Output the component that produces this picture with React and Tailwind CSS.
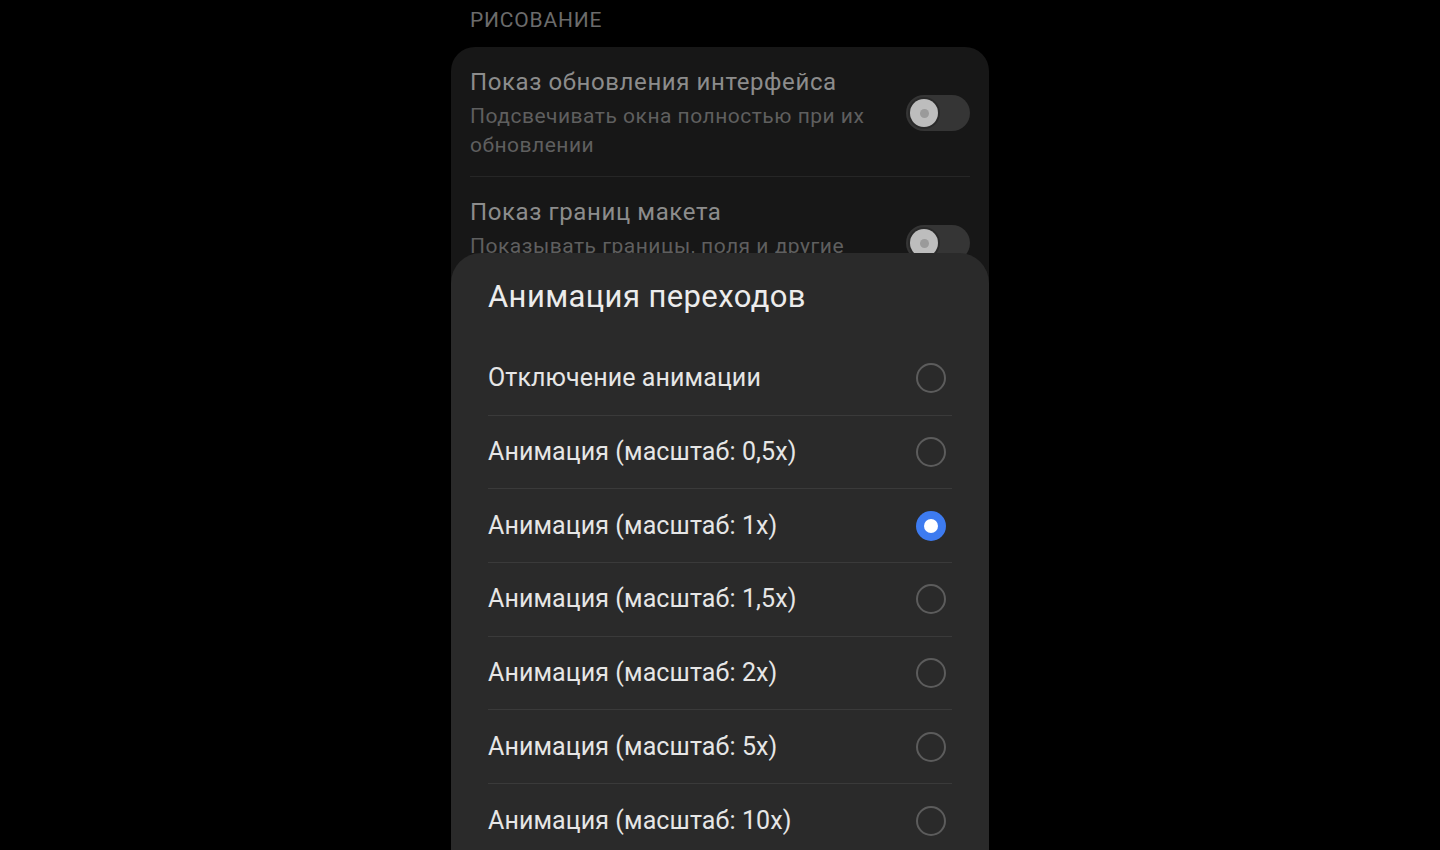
import React from "react";

const options = [
  "Отключение анимации",
  "Анимация (масштаб: 0,5x)",
  "Анимация (масштаб: 1x)",
  "Анимация (масштаб: 1,5x)",
  "Анимация (масштаб: 2x)",
  "Анимация (масштаб: 5x)",
  "Анимация (масштаб: 10x)",
];

function Toggle() {
  return (
    <div className="relative w-[64px] h-[36px] rounded-full bg-[#353535] shrink-0">
      <div className="absolute left-[2px] top-[2px] w-[32px] h-[32px] rounded-full bg-[#2a2a2a] flex items-center justify-center">
        <div className="w-[28px] h-[28px] rounded-full bg-[#bdbdbd] flex items-center justify-center">
          <div className="w-[9px] h-[9px] rounded-full bg-[#9a9a9a]" />
        </div>
      </div>
    </div>
  );
}

function Radio({ checked }) {
  if (checked) {
    return (
      <div className="w-[30px] h-[30px] rounded-full bg-[#3d7bf0] flex items-center justify-center">
        <div className="w-[14px] h-[14px] rounded-full bg-white" />
      </div>
    );
  }
  return <div className="w-[30px] h-[30px] rounded-full border-2 border-[#5c5c5c]" />;
}

export default function App() {
  return (
    <div
      className="w-[1440px] h-[850px] bg-black overflow-hidden flex justify-center"
      style={{ fontFamily: "Roboto, 'Noto Sans', sans-serif" }}
    >
      <div className="w-[538px] relative flex flex-col">
        <div className="pl-[19px] pt-[6px] h-[47px] text-[21px] leading-[28px] tracking-[0.8px] text-[#6b6b6b]">
          РИСОВАНИЕ
        </div>
        <div className="rounded-[24px] bg-[#171717] px-[19px]">
          <div className="flex items-center justify-between pt-[19px] pb-[16px] border-b border-[#262626]">
            <div className="flex flex-col">
              <div className="text-[24px] leading-[33px] tracking-[0.6px] text-[#8c8c8c]">Показ обновления интерфейса</div>
              <div className="mt-[3px] text-[21px] leading-[29px] tracking-[0.5px] text-[#5f5f5f] w-[420px]">
                Подсвечивать окна полностью при их обновлении
              </div>
            </div>
            <Toggle />
          </div>
          <div className="flex items-center justify-between pt-[19px] pb-[16px]">
            <div className="flex flex-col">
              <div className="text-[24px] leading-[33px] tracking-[0.6px] text-[#8c8c8c]">Показ границ макета</div>
              <div className="mt-[3px] text-[21px] leading-[29px] tracking-[0.5px] text-[#5f5f5f] w-[420px]">
                Показывать границы, поля и другие элементы
              </div>
            </div>
            <Toggle />
          </div>
        </div>

        <div className="absolute left-0 right-0 top-[253px] h-[640px] rounded-t-[30px] bg-[#2a2a2a] px-[37px]">
          <div className="pt-[25px] text-[31px] leading-[38px] tracking-[0.4px] text-[#ececec]">Анимация переходов</div>
          <div className="mt-[26px] flex flex-col">
            {options.map((o, i) => (
              <div
                key={o}
                className={
                  "h-[73.7px] flex items-center justify-between pr-[6px] " +
                  (i < options.length - 1 ? "border-b border-[#3a3a3a]" : "")
                }
              >
                <span className="text-[25px] leading-[32px] tracking-[0.1px] text-[#e6e6e6]">{o}</span>
                <Radio checked={i === 2} />
              </div>
            ))}
          </div>
        </div>
      </div>
    </div>
  );
}
